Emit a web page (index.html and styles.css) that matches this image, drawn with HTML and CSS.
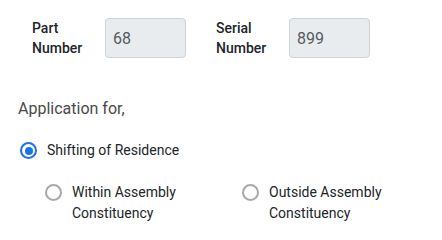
FILE: index.html
```html
<!DOCTYPE html>
<html lang="en">
<head>
<meta charset="utf-8">
<title>Application</title>
<link rel="stylesheet" href="styles.css">
</head>
<body>
<div class="page">
  <div class="id-row">
    <div class="field">
      <label class="field-label" for="part">Part Number</label>
      <input class="field-input" id="part" type="text" value="68" disabled>
    </div>
    <div class="field">
      <label class="field-label" for="serial">Serial Number</label>
      <input class="field-input" id="serial" type="text" value="899" disabled>
    </div>
  </div>

  <p class="question">Application for,</p>

  <label class="option main-option">
    <input class="radio" type="radio" name="app" checked>
    <span class="option-text">Shifting of Residence</span>
  </label>

  <div class="sub-options">
    <label class="option sub-option">
      <input class="radio" type="radio" name="sub">
      <span class="option-text">Within Assembly Constituency</span>
    </label>
    <label class="option sub-option">
      <input class="radio" type="radio" name="sub">
      <span class="option-text">Outside Assembly Constituency</span>
    </label>
  </div>
</div>
</body>
</html>
```

FILE: styles.css
```css
html, body {
  margin: 0;
  padding: 0;
  background: #ffffff;
}

body {
  font-family: Roboto, "Liberation Sans", Arial, sans-serif;
  color: #212529;
}

.page {
  padding: 18px 18px 0 18px;
}

.id-row {
  display: flex;
  padding-left: 14px;
  gap: 30px;
}

.field {
  display: flex;
  align-items: center;
}

.field-label {
  width: 73px;
  font-size: 14px;
  line-height: 20px;
  font-weight: 500;
  color: #212529;
  padding-right: 14px;
  box-sizing: border-box;
}

.field-input {
  box-sizing: border-box;
  width: 81px;
  height: 40px;
  margin: 0;
  padding: 0 7px;
  border: 1px solid #cfd2d6;
  border-radius: 4px;
  background: #e9ecef;
  font-family: Roboto, "Liberation Sans", Arial, sans-serif;
  font-size: 16px;
  color: #555b61;
  -webkit-text-fill-color: #555b61;
  opacity: 1;
}

.question {
  margin: 39px 0 0 0;
  font-size: 16px;
  line-height: 24px;
  color: #4a4a4a;
}

.option {
  display: flex;
  align-items: flex-start;
  font-size: 14px;
  line-height: 21px;
  color: #212529;
}

.main-option {
  margin-top: 19px;
  padding-left: 2px;
}

.radio {
  -webkit-appearance: none;
  appearance: none;
  box-sizing: border-box;
  width: 17px;
  height: 17px;
  margin: 2px 10px 0 0;
  border: 2px solid #a8a8a8;
  border-radius: 50%;
  background: #ffffff;
  flex: none;
  position: relative;
}

.radio:checked {
  border-color: #1a73e8;
}

.radio:checked::after {
  content: "";
  position: absolute;
  left: 50%;
  top: 50%;
  width: 8px;
  height: 8px;
  margin: -4px 0 0 -4px;
  border-radius: 50%;
  background: #1a73e8;
}

.sub-options {
  display: flex;
  margin-top: 21px;
  padding-left: 27px;
}

.sub-option {
  flex: none;
  width: 197px;
  box-sizing: border-box;
  padding-right: 12px;
}
```
